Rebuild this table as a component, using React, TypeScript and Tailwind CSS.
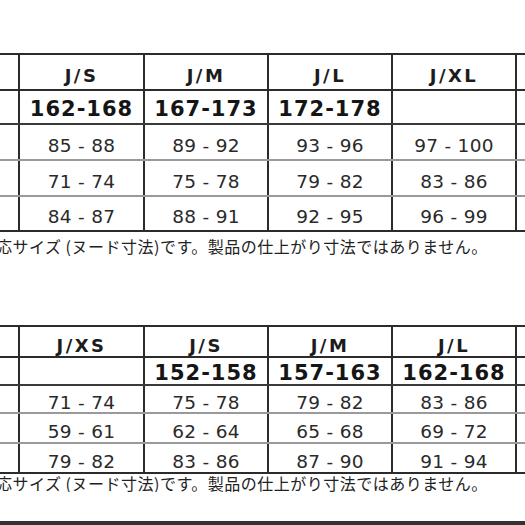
const top = {
  sizes: ["J/S", "J/M", "J/L", "J/XL"],
  heights: ["162-168", "167-173", "172-178", ""],
  rows: [
    ["85 - 88", "89 - 92", "93 - 96", "97 - 100"],
    ["71 - 74", "75 - 78", "79 - 82", "83 - 86"],
    ["84 - 87", "88 - 91", "92 - 95", "96 - 99"],
  ],
};

const bottom = {
  sizes: ["J/XS", "J/S", "J/M", "J/L"],
  heights: ["", "152-158", "157-163", "162-168"],
  rows: [
    ["71 - 74", "75 - 78", "79 - 82", "83 - 86"],
    ["59 - 61", "62 - 64", "65 - 68", "69 - 72"],
    ["79 - 82", "83 - 86", "87 - 90", "91 - 94"],
  ],
};

const cellW = ["w-[20px]", "w-[125px]", "w-[124px]", "w-[124px]", "w-[124px]"];

function Row({
  cells,
  h,
  kind,
  line,
}: {
  cells: string[];
  h: string;
  kind: "size" | "height" | "data";
  line: string;
}) {
  const text =
    kind === "size"
      ? "text-[18px] font-bold tracking-[2.5px] text-[#1c1c1c] pt-[8px]"
      : kind === "height"
        ? "text-[21px] font-bold tracking-[1px] text-[#151515] pt-[5px]"
        : "text-[18.5px] tracking-[0.3px] text-[#2a2a2a] pt-[8px]";
  return (
    <div className={`flex ${h} border-b-2 ${line}`}>
      {["", ...cells].map((c, i) => (
        <div
          key={i}
          className={`${cellW[i]} shrink-0 border-r-2 border-[#2b2b2b] flex items-center justify-center leading-none ${text}`}
        >
          {c}
        </div>
      ))}
      <div className="flex-1" />
    </div>
  );
}

function SizeTable({ data, hs }: { data: typeof top; hs: string[] }) {
  return (
    <div
      className="border-t-2 border-[#2b2b2b]"
      style={{ fontFamily: '"DejaVu Sans", Verdana, sans-serif' }}
    >
      <Row cells={data.sizes} h={hs[0]} kind="size" line="border-[#2b2b2b]" />
      <Row cells={data.heights} h={hs[1]} kind="height" line="border-[#3a3a3a]" />
      {data.rows.map((r, i) => (
        <Row
          key={i}
          cells={r}
          h={hs[2 + i]}
          kind="data"
          line={i === 2 ? "border-[#2b2b2b]" : "border-[#9a9a9a]"}
        />
      ))}
    </div>
  );
}

function Caption({ h }: { h: string }) {
  return (
    <div
      className={`${h} flex items-center whitespace-nowrap text-[16px] tracking-[0.5px] text-[#222] overflow-hidden`}
      style={{ fontFamily: '"Noto Sans CJK JP", "Noto Sans", sans-serif' }}
    >
      <span className="ml-[-4px]">応サイズ (ヌード寸法)です。製品の仕上がり寸法ではありません。</span>
    </div>
  );
}

export default function App() {
  return (
    <div className="w-[525px] h-[525px] bg-white overflow-hidden flex flex-col">
      <div className="h-[53px] shrink-0" />
      <SizeTable
        data={top}
        hs={["h-[36px]", "h-[34px]", "h-[36px]", "h-[36px]", "h-[35px]"]}
      />
      <Caption h="h-[28px]" />
      <div className="h-[65px] shrink-0" />
      <SizeTable
        data={bottom}
        hs={["h-[31px]", "h-[28px]", "h-[28px]", "h-[30px]", "h-[30px]"]}
      />
      <Caption h="h-[18px]" />
      <div className="flex-1" />
      <div className="h-[4px] bg-[#333] shrink-0" />
    </div>
  );
}
